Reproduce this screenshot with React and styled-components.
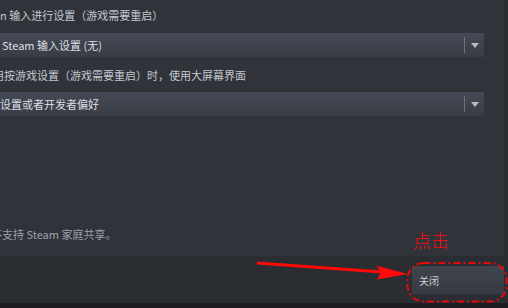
import React from 'react';
import styled, { createGlobalStyle } from 'styled-components';

const GlobalStyle = createGlobalStyle`
  html, body {
    margin: 0;
    padding: 0;
    background: #2a2d32;
  }
`;

const Root = styled.div`
  position: relative;
  width: 508px;
  height: 308px;
  display: flex;
  flex-direction: column;
  overflow: hidden;
  background: #2a2d32;
  font-family: "Noto Sans CJK SC", "Liberation Sans", sans-serif;
`;

const Body = styled.div`
  display: flex;
  height: 256px;
`;

const Content = styled.div`
  flex: 1;
  display: flex;
  flex-direction: column;
  padding: 6px 20px 13px 0;
  background: #30333a;
  min-width: 0;
`;

const ScrollTrack = styled.div`
  width: 4px;
  background: #2a2c31;
`;

const Label = styled.div`
  font-size: 11px;
  line-height: 18px;
  color: ${props => props.muted ? '#9ba1aa' : '#c4c8ce'};
  white-space: nowrap;
  text-indent: ${props => props.indent || 0}px;
  margin-top: ${props => props.gap || 0}px;
`;

const Note = styled(Label)`
  margin-top: auto;
`;

const Dropdown = styled.div`
  height: 24px;
  margin-top: ${props => props.gap || 0}px;
  display: flex;
  align-items: center;
  background: linear-gradient(to bottom, #444955, #383c45);
`;

const DropdownText = styled.div`
  flex: 1;
  padding-left: ${props => props.pad || 0}px;
  font-size: 11px;
  color: #dcdfe3;
  white-space: nowrap;
`;

const Divider = styled.div`
  width: 1px;
  height: 16px;
  background: #6d727b;
`;

const Caret = styled.div`
  width: 19px;
  display: flex;
  justify-content: center;
  align-items: center;
`;

const Footer = styled.div`
  height: 47px;
  box-sizing: border-box;
  display: flex;
  justify-content: flex-end;
  align-items: flex-start;
  padding: 10px 4px 0 0;
  background: #2a2d32;
`;

const Button = styled.div`
  width: 92px;
  height: 28px;
  box-sizing: border-box;
  display: flex;
  align-items: center;
  padding-left: 7px;
  font-size: 10px;
  color: #c9ccd1;
  background: linear-gradient(to bottom, #40444d, #373a42);
`;

const BottomBar = styled.div`
  height: 5px;
  background: #1b1d21;
`;

const Overlay = styled.svg`
  position: absolute;
  left: 0;
  top: 0;
  pointer-events: none;
`;

const ClickHint = styled.span`
  position: absolute;
  left: 413px;
  top: 228px;
  font-size: 18px;
  line-height: 24px;
  color: #ff0a0a;
  font-weight: 300;
`;

const Select = ({ children, gap, pad }) => (
  <Dropdown gap={gap}>
    <DropdownText pad={pad}>{children}</DropdownText>
    <Divider />
    <Caret>
      <svg width="8" height="5" viewBox="0 0 8 5">
        <path d="M0 0 H8 L4 5 Z" fill="#b9bdc3" />
      </svg>
    </Caret>
  </Dropdown>
);

export default function App() {
  return (
    <Root>
      <GlobalStyle />
      <Body>
        <Content>
          <Label>n 输入进行设置（游戏需要重启）</Label>
          <Select gap={9} pad={2}>Steam 输入设置 (无)</Select>
          <Label gap={9} indent={-7}>用按游戏设置（游戏需要重启）时，使用大屏幕界面</Label>
          <Select gap={8}>设置或者开发者偏好</Select>
          <Note muted indent={-9}>不支持 Steam 家庭共享。</Note>
        </Content>
        <ScrollTrack />
      </Body>
      <Footer>
        <Button>关闭</Button>
      </Footer>
      <BottomBar />

      {/* red annotation drawn over the dialog */}
      <Overlay width="508" height="308" viewBox="0 0 508 308">
        <line x1="257" y1="263" x2="382" y2="272" stroke="#ff0a0a" strokeWidth="3" />
        <path d="M376 265.5 L408 274 L377 279.5 L381 272.5 Z" fill="#ff0a0a" />
        <rect
          x="407.5" y="263" width="99" height="38.5" rx="16"
          fill="none" stroke="#e80a0a" strokeWidth="2"
          strokeDasharray="7 3 2 3"
        />
      </Overlay>
      <ClickHint>点击</ClickHint>
    </Root>
  );
}
